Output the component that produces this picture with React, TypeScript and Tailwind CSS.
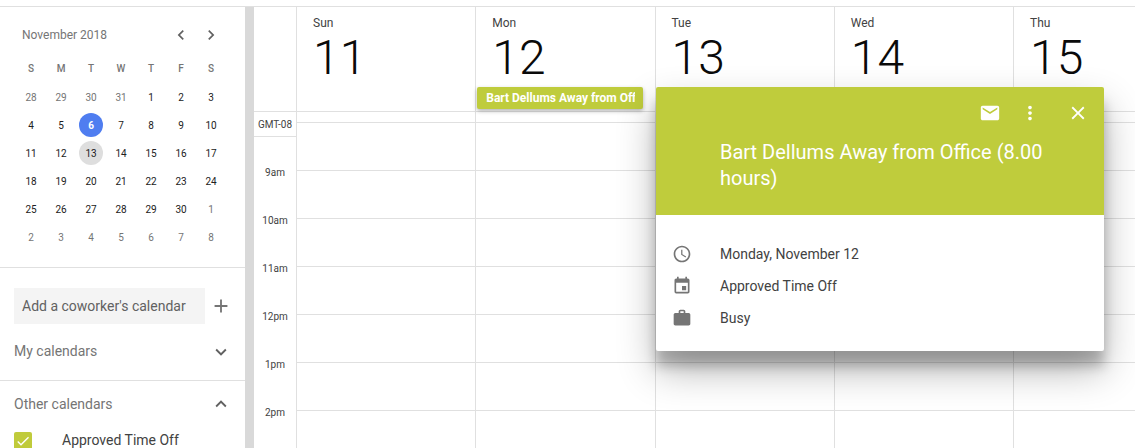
import React from 'react';
import {
  MdAccessTime,
  MdAdd,
  MdCheck,
  MdChevronLeft,
  MdChevronRight,
  MdClose,
  MdEmail,
  MdEvent,
  MdExpandLess,
  MdExpandMore,
  MdMoreVert,
  MdWork,
} from 'react-icons/md';

const weekDays = ['S', 'M', 'T', 'W', 'T', 'F', 'S'];

const monthDays = [
  28, 29, 30, 31, 1, 2, 3,
  4, 5, 6, 7, 8, 9, 10,
  11, 12, 13, 14, 15, 16, 17,
  18, 19, 20, 21, 22, 23, 24,
  25, 26, 27, 28, 29, 30, 1,
  2, 3, 4, 5, 6, 7, 8,
];

const days = [
  { name: 'Sun', date: 11 },
  { name: 'Mon', date: 12 },
  { name: 'Tue', date: 13 },
  { name: 'Wed', date: 14 },
  { name: 'Thu', date: 15 },
];

const hours = ['9am', '10am', '11am', '12pm', '1pm', '2pm'];
const rows = [0, 1, 2, 3, 4, 5, 6];

const MiniCalendar: React.FC = () => (
  <div className="h-[261px] border-b border-[#e0e0e0] pl-4">
    <div className="flex h-[54px] items-center pt-[1px]">
      <span className="ml-[6px] w-[149px] text-xs text-[#757575]">November 2018</span>
      <MdChevronLeft className="text-[20px] text-[#616161]" />
      <MdChevronRight className="ml-[10px] text-[20px] text-[#616161]" />
    </div>
    <div className="grid w-[210px] grid-cols-7 text-center text-[10px] font-medium text-[#757575]">
      {weekDays.map((d, i) => (
        <div key={i} className="flex h-[14px] items-center justify-center">{d}</div>
      ))}
    </div>
    <div className="mt-[8px] grid w-[210px] grid-cols-7 text-[10px]">
      {monthDays.map((d, i) => {
        const muted = i < 4 || i > 33;
        const today = i === 9;
        const selected = i === 16;
        return (
          <div key={i} className="flex h-[28px] items-center justify-center">
            <span
              className={
                today
                  ? 'flex h-6 w-6 items-center justify-center rounded-full bg-[#4f7df0] font-bold text-white'
                  : selected
                    ? 'flex h-6 w-6 items-center justify-center rounded-full bg-[#dedede] text-[#212121]'
                    : muted
                      ? 'text-[#757575]'
                      : 'text-[#212121]'
              }
            >
              {d}
            </span>
          </div>
        );
      })}
    </div>
  </div>
);

const Sidebar: React.FC = () => (
  <aside className="h-full w-[245px] shrink-0 overflow-hidden bg-white">
    <MiniCalendar />
    <div className="border-b border-[#e0e0e0] pb-[2px] pl-[14px] pr-[13px]">
      <div className="mt-5 flex items-center justify-between">
        <div className="flex h-9 w-[191px] items-center bg-[#f4f4f4] pl-2 text-sm text-[#616161]">
          Add a coworker's calendar
        </div>
        <MdAdd className="text-[22px] text-[#757575]" />
      </div>
      <div className="flex h-[54px] items-center justify-between text-sm text-[#757575]">
        <span>My calendars</span>
        <MdExpandMore className="mt-[2px] text-[22px] text-[#616161]" />
      </div>
    </div>
    <div className="pl-[14px] pr-[13px]">
      <div className="flex h-[46px] items-center justify-between text-sm text-[#757575]">
        <span>Other calendars</span>
        <MdExpandLess className="text-[22px] text-[#616161]" />
      </div>
      <div className="mt-[5px] flex items-start">
        <span className="flex h-[18px] w-[18px] items-center justify-center rounded-[2px] bg-[#c0cb3b]">
          <MdCheck className="text-[16px] text-white" />
        </span>
        <span className="ml-[30px] text-sm leading-[16px] text-[#424242]">Approved Time Off</span>
      </div>
    </div>
  </aside>
);

const EventPopup: React.FC = () => (
  <div className="absolute left-[656px] top-[87px] z-20 h-[264px] w-[448px] overflow-hidden rounded-[2px] bg-white shadow-[0_19px_38px_rgba(0,0,0,0.3),0_15px_12px_rgba(0,0,0,0.22)]">
    <div className="h-[128px] bg-[#bfcc3c] text-white">
      <div className="flex h-[52px] items-center justify-end pr-[15px]">
        <MdEmail className="text-[22px]" />
        <MdMoreVert className="ml-[18px] text-[22px]" />
        <MdClose className="ml-[26px] text-[22px]" />
      </div>
      <div className="pl-16 pr-14 text-xl leading-[26px]">
        Bart Dellums Away from Office (8.00 hours)
      </div>
    </div>
    <div className="px-[14px] pt-[23px] text-sm text-[#424242]">
      <div className="flex h-8 items-center">
        <MdAccessTime className="w-6 text-[20px] text-[#757575]" />
        <span className="ml-[26px]">Monday, November 12</span>
      </div>
      <div className="flex h-8 items-center">
        <MdEvent className="w-6 text-[20px] text-[#757575]" />
        <span className="ml-[26px]">Approved Time Off</span>
      </div>
      <div className="flex h-8 items-center">
        <MdWork className="w-6 text-[20px] text-[#757575]" />
        <span className="ml-[26px]">Busy</span>
      </div>
    </div>
  </div>
);

const WeekGrid: React.FC = () => (
  <div className="flex h-full min-w-0 flex-1 overflow-hidden bg-white">
    <div className="w-[42px] shrink-0">
      <div className="h-[105px] border-b border-[#e0e0e0]" />
      <div className="relative z-10 flex h-[25px] w-[43px] items-center justify-center border-r border-b border-[#e0e0e0] bg-white text-[10px] text-[#424242]">
        GMT-08
      </div>
      <div className="mt-[11px] text-[10px] text-[#424242]">
        {hours.map((h) => (
          <div key={h} className="flex h-12 items-center justify-center">{h}</div>
        ))}
      </div>
    </div>
    {days.map((day) => (
      <div key={day.date} className="w-[179.25px] shrink-0 border-l border-[#e0e0e0]">
        <div className="relative h-[105px] border-b border-[#e0e0e0] pl-4 pt-[8px]">
          <div className="text-xs leading-[16px] text-[#424242]">{day.name}</div>
          <div className="mt-[3px] text-[48px] leading-[48px] font-light text-[#0a0a0a]">{day.date}</div>
          {day.date === 12 && (
            <div className="absolute left-[1px] top-[80px] z-10 h-[22px] w-[166px] overflow-hidden whitespace-nowrap rounded-[2px] bg-[#bfcc3c] pl-[9px] pr-[8px] text-xs leading-[22px] font-bold text-white shadow-[0_2px_4px_rgba(0,0,0,0.3)]">
              <div className="overflow-hidden">Bart Dellums Away from Office (8.00 hours)</div>
            </div>
          )}
        </div>
        <div className="h-[11px] border-b border-[#e0e0e0]" />
        {rows.map((r) => (
          <div key={r} className="h-12 border-b border-[#e0e0e0]" />
        ))}
      </div>
    ))}
  </div>
);

const App: React.FC = () => (
  <div className="relative h-[448px] w-[1135px] overflow-hidden bg-white pt-[6px] font-['Roboto',sans-serif]">
    <div className="flex h-full border-t border-[#e0e0e0]">
      <Sidebar />
      <div className="w-[9px] shrink-0 bg-[#d9d9d9]" />
      <WeekGrid />
    </div>
    <EventPopup />
  </div>
);

export default App;
